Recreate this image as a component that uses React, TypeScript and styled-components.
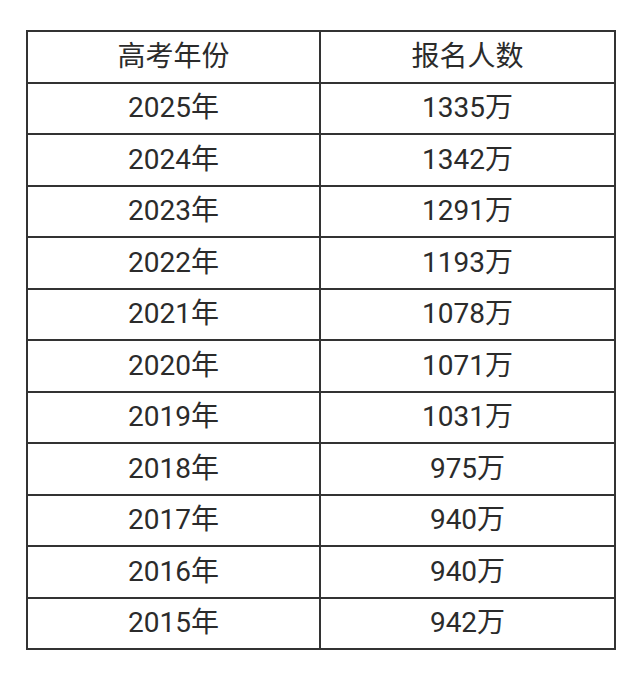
import React from 'react';
import styled, { createGlobalStyle } from 'styled-components';

const GlobalStyle = createGlobalStyle`
  html, body {
    margin: 0;
    padding: 0;
    background: #ffffff;
  }
  body {
    font-family: Roboto, "Noto Sans CJK SC", sans-serif;
  }
`;

const Page = styled.div`
  width: 640px;
  height: 680px;
  padding: 30px 26px 0 26px;
  box-sizing: border-box;
  background: #ffffff;
`;

const Table = styled.table`
  width: 588px;
  border-collapse: collapse;
  border: 2px solid #333;
  table-layout: fixed;
`;

const Row = styled.tr`
  height: 51.5px;
`;

const Cell = styled.td<{ $head?: boolean }>`
  border: 2px solid #333;
  padding: 0;
  text-align: center;
  vertical-align: middle;
  font-size: 28px;
  line-height: 1;
  color: #2b2b2b;
  font-family: Roboto, "Noto Sans CJK SC", sans-serif;
  font-weight: 400;
`;

const data: [string, string][] = [
  ['2025年', '1335万'],
  ['2024年', '1342万'],
  ['2023年', '1291万'],
  ['2022年', '1193万'],
  ['2021年', '1078万'],
  ['2020年', '1071万'],
  ['2019年', '1031万'],
  ['2018年', '975万'],
  ['2017年', '940万'],
  ['2016年', '940万'],
  ['2015年', '942万'],
];

export default function App() {
  return (
    <Page>
      <GlobalStyle />
      <Table>
        <colgroup>
          <col style={{ width: 293 }} />
          <col style={{ width: 295 }} />
        </colgroup>
        <tbody>
          <Row>
            <Cell $head>高考年份</Cell>
            <Cell $head>报名人数</Cell>
          </Row>
          {data.map(([year, count]) => (
            <Row key={year}>
              <Cell>{year}</Cell>
              <Cell>{count}</Cell>
            </Row>
          ))}
        </tbody>
      </Table>
    </Page>
  );
}
